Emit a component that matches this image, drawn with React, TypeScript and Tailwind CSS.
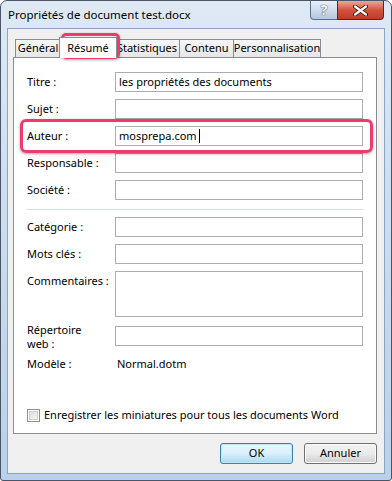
import React from "react";

const font = { fontFamily: '"Noto Sans", "Segoe UI", sans-serif' };

type Row = { label: string; value?: string; cursor?: boolean };

function Field({ label, value, cursor }: Row) {
  return (
    <div className="flex h-[20px] items-center">
      <div className="w-[88px] shrink-0 whitespace-nowrap">{label}</div>
      <div className="flex h-[20px] w-[248px] items-center border border-[#abadb3] bg-white px-[3px] text-black">
        {value}
        {cursor && <span className="ml-[2px] inline-block h-[14px] w-px bg-black" />}
      </div>
    </div>
  );
}

function Tab({ label, w, active }: { label: string; w: number; active?: boolean }) {
  if (active) {
    return (
      <div
        className="relative z-10 -mx-[2px] -mb-px flex h-[21px] items-start justify-center border border-b-0 border-[#898c95] bg-white pt-[2px]"
        style={{ width: w }}
      >
        {label}
      </div>
    );
  }
  return (
    <div
      className="-ml-px flex h-[18px] items-center justify-center whitespace-nowrap border border-b-0 border-[#898c95] bg-gradient-to-b from-[#f7f7f7] to-[#e6e6e6] first:ml-0"
      style={{ width: w }}
    >
      {label}
    </div>
  );
}

export default function App() {
  return (
    <div className="h-[481px] w-[392px] overflow-hidden bg-white" style={font}>
      <div className="relative flex h-[481px] w-[392px] flex-col rounded-t-[7px] rounded-b-[3px] border border-[#4a5666] bg-gradient-to-b from-[#dfe9f5] via-[#c9dbef] to-[#b9d1ea] px-[6px] pb-[6px]">
        {/* title bar */}
        <div className="flex h-[27px] shrink-0 items-center pl-px text-[11.5px] text-black">
          Propriétés de document test.docx
        </div>
        <div className="absolute right-[7px] top-0 flex h-[19px]">
          <div className="flex w-[28px] items-center justify-center rounded-bl-[4px] border border-t-0 border-[#5b6f88] bg-gradient-to-b from-[#e9f0f8] via-[#cfdcec] to-[#b3c6dd] text-[14px] font-bold leading-none text-white [text-shadow:0_0_1px_#34455c,0_0_1px_#34455c]">
            ?
          </div>
          <div className="-ml-px flex w-[47px] items-center justify-center rounded-br-[4px] border border-t-0 border-[#6d1f17] bg-gradient-to-b from-[#e9a99c] via-[#d0533e] to-[#c13a25]">
            <svg width="15" height="11" viewBox="0 0 15 11">
              <path d="M2 1.5 L13 9.5 M13 1.5 L2 9.5" stroke="#3a1510" strokeWidth="4" strokeLinecap="round" />
              <path d="M2 1.5 L13 9.5 M13 1.5 L2 9.5" stroke="#ffffff" strokeWidth="2.2" strokeLinecap="round" />
            </svg>
          </div>
        </div>

        {/* client area */}
        <div className="flex flex-1 flex-col border border-[#8ea3bc] bg-[#f0f0f0] pl-[5px] pr-[7px] pt-[8px] text-[11px] text-black">
          {/* tabs */}
          <div className="relative flex h-[20px] items-end pl-[2px]">
            <Tab label="Général" w={46} />
            <Tab label="Résumé" w={58} active />
            <Tab label="Statistiques" w={66} />
            <Tab label="Contenu" w={55} />
            <Tab label="Personnalisation" w={88} />
            <div className="pointer-events-none absolute left-[48px] top-[-4px] h-[26px] w-[59px] rounded-[5px] border-[3px] border-[#ef3a6c] shadow-[0_1px_3px_rgba(0,0,0,0.35)]" />
          </div>

          {/* panel */}
          <div className="flex h-[377px] flex-col border border-[#898c95] bg-white pl-[13px] pt-[14px]">
            <div className="flex flex-col gap-[7px]">
              <Field label="Titre :" value="les propriétés des documents" />
              <Field label="Sujet :" />
              <div className="relative">
                <Field label="Auteur :" value="mosprepa.com" cursor />
                <div className="pointer-events-none absolute -left-[7px] -top-[7px] h-[34px] w-[353px] rounded-[6px] border-[3px] border-[#ef3a6c] shadow-[0_1px_3px_rgba(0,0,0,0.35)]" />
              </div>
              <Field label="Responsable :" />
              <Field label="Société :" />
            </div>

            <div className="mb-[7px] mt-[9px] h-px w-[336px] bg-[#d3dfe9]" />

            <div className="flex flex-col gap-[7px]">
              <Field label="Catégorie :" />
              <Field label="Mots clés :" />
              <div className="flex h-[46px]">
                <div className="w-[88px] shrink-0 whitespace-nowrap pt-[2px]">Commentaires :</div>
                <div className="h-[46px] w-[248px] border border-[#abadb3] bg-white" />
              </div>
            </div>

            <div className="mt-[9px] flex h-[30px]">
              <div className="-mt-[3px] w-[88px] shrink-0 leading-[14px]">
                Répertoire
                <br />
                web :
              </div>
              <div className="h-[20px] w-[248px] border border-[#abadb3] bg-white" />
            </div>

            <div className="flex h-[16px] items-center">
              <div className="w-[90px] shrink-0">Modèle :</div>
              <div>Normal.dotm</div>
            </div>

            <div className="mt-[35px] flex items-center gap-[4px]">
              <div className="flex h-[13px] w-[13px] items-center justify-center border border-[#8f8f8f] bg-white">
                <div className="h-[9px] w-[9px] border border-[#cdcdcd] bg-gradient-to-br from-[#dcdcdc] to-[#f6f6f6]" />
              </div>
              Enregistrer les miniatures pour tous les documents Word
            </div>
          </div>

          {/* buttons */}
          <div className="mt-[9px] flex justify-end gap-[11px]">
            <button className="h-[21px] w-[73px] rounded-[3px] border border-[#3c7fb1] bg-gradient-to-b from-[#eaf6fd] via-[#d9f0fc] to-[#a7d9f5] shadow-[inset_0_0_0_1px_#c1e5f9]">
              OK
            </button>
            <button className="h-[21px] w-[73px] rounded-[3px] border border-[#707070] bg-gradient-to-b from-[#f2f2f2] via-[#ebebeb] to-[#cfcfcf] shadow-[inset_0_0_0_1px_#fcfcfc]">
              Annuler
            </button>
          </div>
        </div>
      </div>
    </div>
  );
}
